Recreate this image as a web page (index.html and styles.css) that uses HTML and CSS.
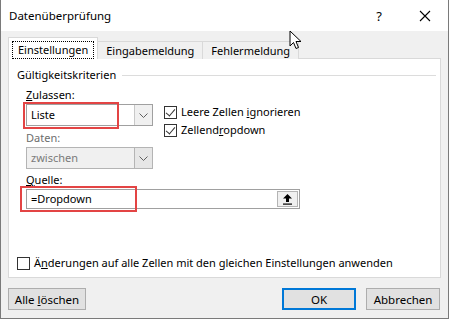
FILE: index.html
```html
<!DOCTYPE html>
<html lang="de">
<head>
    <meta charset="UTF-8">
    <title>Datenüberprüfung</title>
    <link rel="stylesheet" href="styles.css">
</head>
<body>

<div class="dialog">
    <div class="title-bar">
        <span class="title">Datenüberprüfung</span>
        <span class="help">?</span>
        <svg class="close" width="12" height="12" viewBox="0 0 12 12">
            <path d="M1 1 L11 11 M11 1 L1 11" stroke="#000" stroke-width="1.1" fill="none"/>
        </svg>
    </div>

    <div class="content">
        <div class="tabs">
            <div class="tab active"><span class="focus">Einstellungen</span></div>
            <div class="tab">Eingabemeldung</div>
            <div class="tab">Fehlermeldung</div>
        </div>

        <div class="panel">
            <div class="group-title">
                <span>Gültigkeitskriterien</span>
                <div class="group-line"></div>
            </div>

            <div class="criteria">
                <div class="left-col">
                    <div class="label"><u>Z</u>ulassen:</div>
                    <div class="combo">
                        <span class="combo-text">Liste</span>
                        <span class="combo-btn">
                            <svg width="9" height="5" viewBox="0 0 9 5"><path d="M0.5 0.5 L4.5 4.5 L8.5 0.5" stroke="#606060" fill="none"/></svg>
                        </span>
                        <div class="mark mark-liste"></div>
                    </div>
                    <div class="label disabled">Daten:</div>
                    <div class="combo combo-disabled">
                        <span class="combo-text">zwischen</span>
                        <span class="combo-btn">
                            <svg width="9" height="5" viewBox="0 0 9 5"><path d="M0.5 0.5 L4.5 4.5 L8.5 0.5" stroke="#606060" fill="none"/></svg>
                        </span>
                    </div>
                </div>
                <div class="right-col">
                    <label class="check-row"><span class="box checked"></span><span>Leere Zellen <u>i</u>gnorieren</span></label>
                    <label class="check-row"><span class="box checked"></span><span>Zellend<u>r</u>opdown</span></label>
                </div>
            </div>

            <div class="label"><u>Q</u>uelle:</div>
            <div class="source">
                <span class="source-text">=Dropdown</span>
                <span class="source-btn">
                    <svg width="11" height="12" viewBox="0 0 11 12">
                        <path d="M5.5 1 L10 5.5 L7 5.5 L7 9 L4 9 L4 5.5 L1 5.5 Z" fill="#000"/>
                        <rect x="1" y="10.5" width="9" height="1.2" fill="#000"/>
                    </svg>
                </span>
                <div class="mark mark-source"></div>
            </div>

            <label class="check-row apply"><span class="box"></span><span>Ä<u>n</u>derungen auf alle Zellen mit den gleichen Einstellungen anwenden</span></label>
        </div>

        <div class="buttons">
            <button type="button" class="btn">Alle <u>l</u>öschen</button>
            <div class="spacer"></div>
            <button type="button" class="btn default">OK</button>
            <button type="button" class="btn">Abbrechen</button>
        </div>
    </div>

    <svg class="cursor" width="14" height="20" viewBox="0 0 14 20">
        <path d="M1 1 L1 16 L4.5 12.5 L7 18.5 L9.5 17.5 L7 11.5 L12 11.5 Z" fill="#fff" stroke="#000" stroke-width="1"/>
    </svg>
</div>

</body>
</html>
```

FILE: styles.css
```css
html, body {
    margin: 0;
    padding: 0;
}
body {
    font-family: "Noto Sans", "Open Sans", sans-serif;
    font-size: 11px;
    color: #000;
}
u {
    text-decoration: underline;
    text-underline-offset: 1px;
}
.dialog {
    position: relative;
    width: 449px;
    height: 319px;
    box-sizing: border-box;
    border: 1px solid #7a7a7a;
    border-top: none;
    background-color: #f0f0f0;
    overflow: hidden;
}
.title-bar {
    height: 31px;
    background-color: #fff;
    display: flex;
    align-items: center;
    padding-left: 8px;
}
.title {
    flex: 1;
    font-size: 11.5px;
}
.help {
    font-size: 13px;
    margin-right: 37px;
}
.close {
    margin-right: 17px;
}
.content {
    padding: 7px 7px 0 7px;
}
.tabs {
    display: flex;
    align-items: flex-end;
    height: 21px;
    margin-bottom: -1px;
    position: relative;
    z-index: 1;
}
.tab {
    height: 18px;
    box-sizing: border-box;
    padding: 0 8px;
    border: 1px solid #d9d9d9;
    border-bottom: none;
    border-left: none;
    background-color: #f0f0f0;
    line-height: 17px;
}
.tab.active {
    height: 22px;
    background-color: #fff;
    border-left: 1px solid #d9d9d9;
    padding: 3px 3px 0 3px;
    line-height: 16px;
}
.focus {
    display: inline-block;
    border: 1px dotted #000;
    padding: 0 5px;
}
.panel {
    height: 220px;
    box-sizing: border-box;
    background-color: #fff;
    border: 1px solid #d9d9d9;
    padding: 8px 8px 0 8px;
}
.group-title {
    display: flex;
    align-items: center;
    height: 16px;
    line-height: 16px;
}
.group-line {
    flex: 1;
    height: 1px;
    background-color: #dcdcdc;
    margin-left: 6px;
    margin-right: -4px;
}
.criteria {
    display: flex;
    padding-left: 9px;
}
.left-col {
    width: 127px;
}
.right-col {
    margin-left: 11px;
    padding-top: 20px;
}
.label {
    height: 16px;
    line-height: 16px;
    margin-top: 4px;
    margin-bottom: 1px;
}
.label.disabled {
    color: #6d6d6d;
}
.panel > .label {
    margin-left: 9px;
    margin-top: 3px;
}
.combo {
    position: relative;
    display: flex;
    height: 22px;
    box-sizing: border-box;
    border: 1px solid #a0a0a0;
    background-color: #fff;
}
.combo-text {
    flex: 1;
    padding-left: 4px;
    line-height: 20px;
}
.combo-btn {
    width: 17px;
    border-left: 1px solid #c8c8c8;
    background-color: #f0f0f0;
    display: flex;
    align-items: center;
    justify-content: center;
}
.combo-disabled {
    background-color: #f0f0f0;
    border-color: #b4b4b4;
    color: #7a7a7a;
}
.combo-disabled .combo-btn {
    background-color: #e6e6e6;
    border-left-color: #b4b4b4;
}
.check-row {
    display: flex;
    align-items: center;
    height: 18px;
    line-height: 16px;
}
.box {
    width: 13px;
    height: 13px;
    box-sizing: border-box;
    border: 1px solid #333;
    background-color: #fff;
    margin-right: 4px;
    position: relative;
}
.box.checked::after {
    content: "";
    position: absolute;
    left: 3px;
    top: 0px;
    width: 4px;
    height: 8px;
    border-right: 1px solid #333;
    border-bottom: 1px solid #333;
    transform: rotate(40deg);
}
.source {
    position: relative;
    display: flex;
    margin-left: 9px;
    width: 274px;
    height: 20px;
    box-sizing: border-box;
    border: 1px solid #a0a0a0;
    background-color: #fff;
}
.source-text {
    flex: 1;
    padding-left: 4px;
    line-height: 18px;
}
.source-btn {
    width: 19px;
    margin: 1px;
    border: 1px solid #b4b4b4;
    background-color: #f0f0f0;
    display: flex;
    align-items: center;
    justify-content: center;
}
.mark {
    position: absolute;
    border: 2px solid #e34444;
}
.mark-liste {
    left: -4px;
    top: -3px;
    width: 92px;
    height: 23px;
}
.mark-source {
    left: -7px;
    top: -4px;
    width: 113px;
    height: 22px;
}
.apply {
    margin-top: 45px;
    margin-left: 0;
}
.buttons {
    display: flex;
    padding-top: 10px;
}
.spacer {
    flex: 1;
}
.btn {
    height: 22px;
    width: 78px;
    box-sizing: border-box;
    border: 1px solid #adadad;
    background-color: #e1e1e1;
    font-family: inherit;
    font-size: 11.5px;
    color: #000;
    padding: 0;
}
.btn.default {
    width: 74px;
    border: 2px solid #0078d7;
    margin-right: 10px;
}
.btn:last-child {
    width: 74px;
    margin-right: 1px;
}
.cursor {
    position: absolute;
    left: 288px;
    top: 30px;
    z-index: 5;
}
```
